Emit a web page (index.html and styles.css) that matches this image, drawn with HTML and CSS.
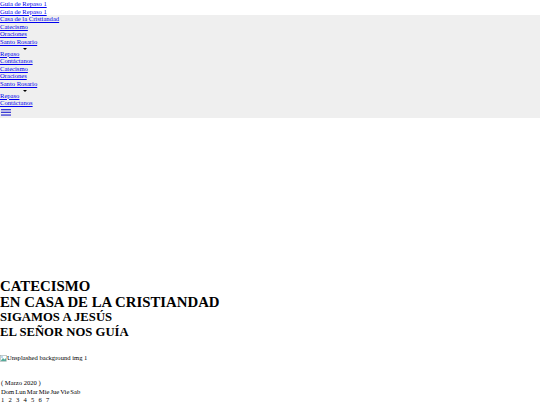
FILE: index.html
```html
<!DOCTYPE html>
<html lang="es">
<head>
<meta charset="utf-8">
<title>Casa de la Cristiandad</title>
<link rel="stylesheet" href="styles.css">
</head>
<body>
<div class="top-links">
  <a href="#">Guía de Repaso 1</a>
  <a href="#">Guía de Repaso 1</a>
</div>
<nav class="navbar">
  <a href="#" class="brand">Casa de la Cristiandad</a>
  <ul class="menu">
    <li><a href="#">Catecismo</a></li>
    <li><a href="#">Oraciones</a></li>
    <li><a href="#">Santo Rosario</a></li>
    <li class="dropdown"><a href="#" class="toggle">Repaso</a><span class="caret"></span></li>
    <li><a href="#">Contáctanos</a></li>
  </ul>
  <ul class="menu">
    <li><a href="#">Catecismo</a></li>
    <li><a href="#">Oraciones</a></li>
    <li><a href="#">Santo Rosario</a></li>
    <li class="dropdown"><a href="#" class="toggle">Repaso</a><span class="caret"></span></li>
    <li><a href="#">Contáctanos</a></li>
  </ul>
  <a href="#" class="burger" aria-label="menu">
    <svg width="10" height="7" viewBox="0 0 10 7"><rect x="0" y="0" width="10" height="1.3" fill="#3b3bd6"/><rect x="0" y="2.7" width="10" height="1.3" fill="#3b3bd6"/><rect x="0" y="5.4" width="10" height="1.3" fill="#3b3bd6"/></svg>
  </a>
</nav>
<section class="hero">
  <h1>CATECISMO<br>EN CASA DE LA CRISTIANDAD</h1>
  <h2>SIGAMOS A JESÚS<br>EL SEÑOR NOS GUÍA</h2>
</section>
<div class="img-alt">
  <svg class="broken" width="7" height="7" viewBox="0 0 7 7"><rect x="0.5" y="0.5" width="6" height="6" fill="#fff" stroke="#9aa" stroke-width="0.6"/><path d="M1 5.5 L3 3 L4.5 4.5 L6 3 V6 H1 Z" fill="#5a9"/><circle cx="2" cy="2" r="0.8" fill="#6ad"/></svg><span>Unsplashed background img 1</span>
</div>
<div class="calendar">
  <div class="month">( Marzo 2020 )</div>
  <ul class="weekdays">
    <li>Dom</li><li>Lun</li><li>Mar</li><li>Mie</li><li>Jue</li><li>Vie</li><li>Sab</li>
  </ul>
  <ul class="days">
    <li>1</li><li>2</li><li>3</li><li>4</li><li>5</li><li>6</li><li>7</li>
  </ul>
</div>
</body>
</html>
```

FILE: styles.css
```css
html, body {
  margin: 0;
  padding: 0;
  background: #fff;
}
body {
  font-family: "Liberation Serif", "Times New Roman", serif;
  font-size: 6.6px;
  line-height: 7.5px;
  color: #000;
}
a {
  color: #0000ee;
  text-decoration: underline;
}
.top-links {
  display: flex;
  flex-direction: column;
  align-items: flex-start;
}
.navbar {
  background: #efefef;
  display: flex;
  flex-direction: column;
  align-items: flex-start;
}
.menu {
  list-style: none;
  margin: 0;
  padding: 0;
}
.menu li {
  display: block;
  white-space: nowrap;
}
.menu li.dropdown {
  display: flex;
  align-items: flex-start;
}
.dropdown .toggle {
  margin-top: 4.5px;
}
.caret {
  display: block;
  flex: none;
  margin: 2.5px 0 0 3.5px;
  width: 0;
  height: 0;
  border-top: 2.2px solid #000;
  border-left: 2.2px solid transparent;
  border-right: 2.2px solid transparent;
}
.burger {
  display: block;
  height: 11.5px;
  padding: 2px 0 0 1px;
  box-sizing: border-box;
}
.burger svg {
  display: block;
}
.hero {
  padding-top: 160px;
}
h1 {
  margin: 0;
  font-size: 14.8px;
  line-height: 16px;
  font-weight: bold;
}
h2 {
  margin: 0;
  font-size: 12.7px;
  line-height: 15px;
  font-weight: bold;
}
.img-alt {
  margin-top: 14px;
  display: flex;
  align-items: center;
  height: 8px;
}
.broken {
  display: block;
}
.calendar {
  margin-top: 17px;
}
.month {
  padding-left: 1px;
}
.weekdays, .days {
  list-style: none;
  margin: 1px 0 0;
  padding: 0 0 0 1px;
  display: flex;
}
.weekdays {
  gap: 1px;
}
.days {
  gap: 4.2px;
}
```
